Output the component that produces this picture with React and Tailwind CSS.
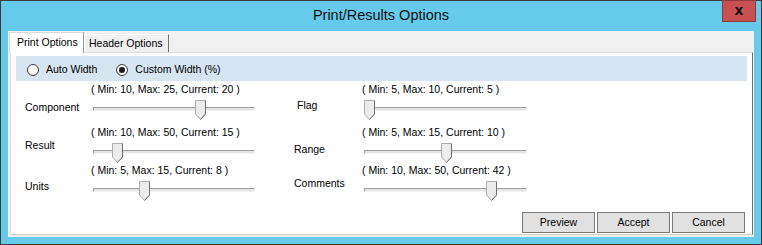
import React from 'react'

const ROWS = [
  {
    height: 'h-[43px]',
    left: { label: 'Component', pad: 'pt-[19px]', min: 10, max: 25, value: 20 },
    right: { label: 'Flag', pad: 'pt-[17px] pl-[3px]', min: 5, max: 10, value: 5 },
  },
  {
    height: 'h-[38px]',
    left: { label: 'Result', pad: 'pt-[14px]', min: 10, max: 50, value: 15 },
    right: { label: 'Range', pad: 'pt-[18px]', min: 5, max: 15, value: 10 },
  },
  {
    height: 'h-[38px]',
    left: { label: 'Units', pad: 'pt-[17px]', min: 5, max: 15, value: 8 },
    right: { label: 'Comments', pad: 'pt-[14px]', min: 10, max: 50, value: 42 },
  },
]

function Thumb({ left }) {
  return (
    <svg className="absolute top-0" style={{ left }} width="11" height="20" viewBox="0 0 11 20">
      <path d="M0.5 0.5 H10.5 V14 L5.5 19.5 L0.5 14 Z" fill="#ececec" stroke="#adadad" />
      <path d="M10.5 0.5 V14 L5.5 19.5" fill="none" stroke="#707070" />
    </svg>
  )
}

function TrackSlider({ min, max, value, wide }) {
  const frac = (value - min) / (max - min)
  return (
    <div className={`flex flex-col ${wide ? 'w-[165px]' : 'w-[164px]'}`}>
      <div className="mt-[1px] h-[14px] leading-[14px] whitespace-nowrap">
        ( Min: {min}, Max: {max}, Current: {value} )
      </div>
      <div className="relative mt-[4px] h-[20px] pt-[7px]">
        <div className="ml-[2px] h-[4px] border border-[#a0a0a0] border-b-[#f4f4f4] border-r-[#f4f4f4] bg-[#e4e4e4]" />
        <Thumb left={2 + frac * 153} />
      </div>
    </div>
  )
}

function Radio({ checked, label }) {
  return (
    <div className="flex items-center">
      <span className="flex h-[12px] w-[12px] items-center justify-center rounded-full border border-[#3a3a3a] bg-white">
        {checked && <span className="h-[6px] w-[6px] rounded-full bg-[#1a1a1a]" />}
      </span>
      <span className="ml-[7px]">{label}</span>
    </div>
  )
}

export default function App() {
  return (
    <div className="flex h-[245px] w-[762px] flex-col border border-[#3c3c3c] bg-[#66cbea] font-['Liberation_Sans',Arial,sans-serif] text-[10.5px] text-black">
      {/* title bar */}
      <div className="relative flex h-[30px] shrink-0 items-center justify-center">
        <span className="text-[14.5px] text-[#111]">Print/Results Options</span>
        <div className="absolute right-[5px] top-[-1px] flex h-[22px] w-[34px] items-center justify-center border border-[#8a3c3c] bg-[#c75050]">
          <span className="-mt-[3px] text-[15px] font-bold leading-none">x</span>
        </div>
      </div>

      {/* client area */}
      <div className="mx-[7px] mb-[7px] flex flex-1 flex-col bg-[#f0f0f0]">
        {/* tabs */}
        <div className="relative z-10 flex h-[21px] items-end pl-[1px]">
          <div className="-mb-px flex h-[21px] w-[75px] items-center border border-b-0 border-[#dadada] border-r-[#9a9a9a] bg-white pl-[7px]">
            Print Options
          </div>
          <div className="flex h-[18px] w-[85px] items-center border border-b-0 border-white border-r-[#707070] pl-[4px]">
            Header Options
          </div>
        </div>

        {/* tab page */}
        <div className="mb-[2px] ml-[2px] mr-[1px] flex flex-1 flex-col border border-[#e0e0e0] border-r-[#707070] border-b-[#d0d0d0] bg-white">
          <div className="mx-[5px] mt-[3px] flex h-[25px] items-center gap-[19px] bg-[#d7e4f2] pl-[11px] pt-[3px]">
            <Radio label="Auto Width" />
            <Radio checked label="Custom Width (%)" />
          </div>

          {ROWS.map((row) => (
            <div key={row.left.label} className={`flex pl-[14px] ${row.height}`}>
              <div className={`w-[66px] ${row.left.pad}`}>{row.left.label}</div>
              <TrackSlider min={row.left.min} max={row.left.max} value={row.left.value} />
              <div className={`ml-[39px] w-[68px] ${row.right.pad}`}>{row.right.label}</div>
              <TrackSlider wide min={row.right.min} max={row.right.max} value={row.right.value} />
            </div>
          ))}

          <div className="mt-[12px] flex justify-end gap-[2px] pr-[7px]">
            {['Preview', 'Accept', 'Cancel'].map((b) => (
              <button
                key={b}
                className="h-[21px] w-[73px] border border-[#7a7a7a] bg-[#e1e1e1] text-[10.5px] leading-none"
              >
                {b}
              </button>
            ))}
          </div>
        </div>
      </div>
    </div>
  )
}
